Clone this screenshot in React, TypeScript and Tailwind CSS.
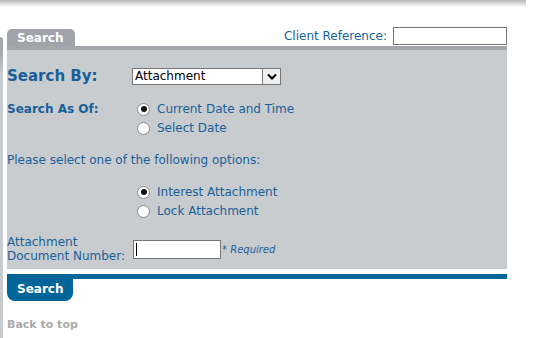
import React from 'react';

const font = { fontFamily: 'Tahoma, "DejaVu Sans", sans-serif' };

function Radio({ checked }: { checked?: boolean }) {
  return (
    <span className="w-[13px] h-[13px] rounded-full border border-[#8a8a8a] bg-white flex items-center justify-center shrink-0">
      {checked && <span className="w-[6px] h-[6px] rounded-full bg-[#111]" />}
    </span>
  );
}

function Option({ label, checked }: { label: string; checked?: boolean }) {
  return (
    <div className="flex items-center gap-[7px] h-[19px]">
      <Radio checked={checked} />
      <span className="text-[12px] text-[#17609a]">{label}</span>
    </div>
  );
}

export default function App() {
  return (
    <div className="w-[541px] h-[338px] bg-white overflow-hidden" style={font}>
      {/* top shadow */}
      <div className="h-[7px] w-[526px] bg-gradient-to-b from-[#b8b8b8] to-white" />

      <div className="flex">
        {/* left edge of previous panel */}
        <div className="w-[3px] mt-[30px] h-[301px] rounded-tr-[3px] bg-gradient-to-b from-[#a3a6ab] from-[5%] to-[#c9ccce] to-[12%]" />

        <div className="ml-[4px] w-[500px]">
          {/* header row */}
          <div className="flex items-end justify-between h-[39px]">
            <div className="w-[68px] h-[17px] rounded-t-[5px] bg-[#a0a3a9] text-white font-bold text-[12px] leading-[18px] pl-[10px]">
              Search
            </div>
            <div className="flex items-center gap-[6px] mb-[1px]">
              <span className="text-[12px] text-[#17609a]">Client Reference:</span>
              <div className="w-[114px] h-[18px] bg-white border border-[#777]" />
            </div>
          </div>
          <div className="h-[4px] bg-[#a3a6ab]" />

          {/* panel */}
          <div className="h-[219px] bg-[#c9ccce]">
            <div className="flex items-center pt-[15px]">
              <span className="w-[125px] text-[15px] font-bold text-[#17609a]">Search By:</span>
              <div className="w-[149px] h-[17px] bg-white border border-[#777] flex items-center">
                <span className="flex-1 text-[12px] text-black pl-[2px] leading-[14px]">Attachment</span>
                <span className="w-[18px] h-[15px] border-l border-[#777] bg-[#f0f0f0] flex items-center justify-center">
                  <svg width="10" height="7" viewBox="0 0 10 7">
                    <path d="M1 1.5 L5 5.5 L9 1.5" stroke="#000" strokeWidth="2" fill="none" />
                  </svg>
                </span>
              </div>
            </div>

            <div className="flex mt-[12px]">
              <span className="w-[130px] text-[12px] font-bold text-[#17609a] leading-[19px]">Search As Of:</span>
              <div>
                <Option label="Current Date and Time" checked />
                <Option label="Select Date" />
              </div>
            </div>

            <div className="mt-[13px] text-[12px] text-[#17609a] leading-[19px]">
              Please select one of the following options:
            </div>

            <div className="ml-[130px] mt-[13px]">
              <Option label="Interest Attachment" checked />
              <Option label="Lock Attachment" />
            </div>

            <div className="flex items-end mt-[11px]">
              <span className="w-[126px] text-[12px] text-[#17609a] leading-[14px] translate-y-[3px]">
                Attachment
                <br />
                Document Number:
              </span>
              <div className="w-[88px] h-[19px] bg-white border border-[#777] mb-[1px] flex items-center pl-[2px]">
                <span className="w-[1px] h-[13px] bg-black" />
              </div>
              <span className="text-[10px] italic text-[#17609a] mb-[3px] ml-[1px]">* Required</span>
            </div>
          </div>

          <div className="h-[5px]" />
          <div className="h-[5px] bg-[#00669a]" />
          <div className="w-[66px] h-[22px] rounded-b-[8px] bg-[#00669a] text-white font-bold text-[12px] leading-[20px] pl-[10px]">
            Search
          </div>

          <div className="mt-[16px] text-[11px] font-bold text-[#a9a9a9]">Back to top</div>
        </div>
      </div>
    </div>
  );
}
